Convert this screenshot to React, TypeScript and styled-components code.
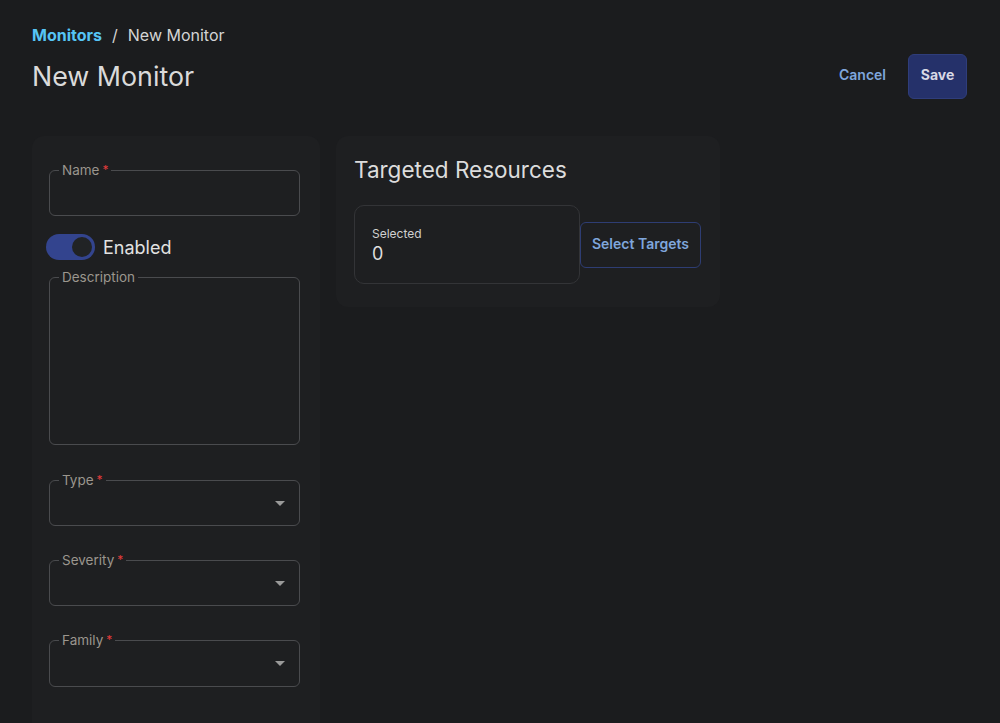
import React from "react";
import styled, { createGlobalStyle } from "styled-components";

const Global = createGlobalStyle`
  html, body { margin: 0; padding: 0; background: #1b1c1e; }
  body { font-family: Inter, "Noto Sans", sans-serif; color: #dcdcdc; }
  * { box-sizing: border-box; }
`;

const Page = styled.div`
  height: 723px;
  padding: 24px 32px 0 32px;
  background: #1b1c1e;
  overflow: hidden;
`;

const Header = styled.div`
  display: flex;
  justify-content: space-between;
  align-items: flex-start;
`;

const TitleBlock = styled.div`
  display: flex;
  flex-direction: column;
`;

const Breadcrumb = styled.div`
  display: flex;
  align-items: center;
  gap: 10px;
  font-size: 16px;
  line-height: 22px;
  color: #d4d4d4;
`;

const Crumb = styled.span`
  color: #56c4f5;
  font-weight: 700;
`;

const Sep = styled.span`
  color: #d4d4d4;
`;

const Title = styled.h1`
  margin: 12px 0 0 0;
  font-size: 26.8px;
  font-weight: 400;
  line-height: 36px;
  color: #dadada;
`;

const Actions = styled.div`
  display: flex;
  align-items: center;
  gap: 12px;
  margin-top: 30px;
  margin-right: 1px;
`;

const TextButton = styled.button`
  background: none;
  border: none;
  color: #7fa6dc;
  font-family: inherit;
  font-size: 14px;
  font-weight: 600;
  padding: 6px 10px 10px 10px;
  cursor: pointer;
`;

const PrimaryButton = styled.button`
  background: #25316a;
  border: 1px solid #2f3d7a;
  border-radius: 6px;
  color: #d8d9e6;
  font-family: inherit;
  font-size: 14px;
  font-weight: 700;
  width: 59px;
  height: 45px;
  padding: 0 0 4px 0;
  cursor: pointer;
`;

const Body = styled.div`
  display: flex;
  align-items: flex-start;
  gap: 16px;
  margin-top: 37px;
`;

const Panel = styled.div<{ $w: number }>`
  width: ${(p) => p.$w}px;
  background: #1e1f21;
  border-radius: 12px;
`;

const FormPanel = styled(Panel)`
  padding: 34px 20px 40px 17px;
  display: flex;
  flex-direction: column;
  min-height: 620px;
`;

const Fieldset = styled.fieldset<{ $h: number; $mt: number }>`
  margin: ${(p) => p.$mt}px 0 0 0;
  padding: 0 12px;
  height: ${(p) => p.$h + 8}px;
  border: 1px solid #4a4b4e;
  border-radius: 6px;
  position: relative;
  min-width: 0;
`;

const Legend = styled.legend`
  padding: 0 3px;
  margin-left: -3px;
  font-size: 13.5px;
  line-height: 16px;
  color: #9b968e;
`;

const Req = styled.span`
  color: #e23b3b;
  margin-left: 3px;
  font-size: 12px;
  vertical-align: top;
`;

const Caret = styled.span`
  position: absolute;
  right: 14px;
  top: 13px;
  width: 0;
  height: 0;
  border-left: 5px solid transparent;
  border-right: 5px solid transparent;
  border-top: 5px solid #9a9a9a;
`;

const ToggleRow = styled.label`
  display: flex;
  align-items: center;
  gap: 8px;
  margin: 18px 0 0 -3px;
  font-size: 18px;
  color: #e2e2e2;
`;

const Track = styled.span`
  width: 49px;
  height: 26px;
  border-radius: 13px;
  background: #33448e;
  position: relative;
  display: inline-block;
`;

const Thumb = styled.span`
  position: absolute;
  right: 3px;
  top: 3px;
  width: 20px;
  height: 20px;
  border-radius: 50%;
  background: #212325;
`;

const TargetPanel = styled(Panel)`
  padding: 20px 19px 23px 18px;
`;

const PanelTitle = styled.h2`
  margin: 0;
  font-size: 22.5px;
  font-weight: 400;
  line-height: 28px;
  color: #dcdcdc;
`;

const TargetRow = styled.div`
  display: flex;
  align-items: center;
  margin-top: 21px;
`;

const StatCard = styled.div`
  width: 226px;
  height: 79px;
  border: 1px solid #333437;
  border-radius: 10px;
  padding: 20px 17px;
  display: flex;
  flex-direction: column;
`;

const StatLabel = styled.span`
  font-size: 12px;
  line-height: 16px;
  color: #d0d0d0;
`;

const StatValue = styled.span`
  font-size: 18px;
  line-height: 24px;
  color: #dedede;
`;

const OutlineButton = styled.button`
  height: 46px;
  width: 121px;
  background: transparent;
  border: 1px solid #2e3d73;
  border-radius: 6px;
  color: #7fa6dc;
  font-family: inherit;
  font-size: 14px;
  font-weight: 600;
  padding: 0 0 2px 0;
  cursor: pointer;
`;

function Field({ label, required, h, mt, select }: { label: string; required?: boolean; h: number; mt: number; select?: boolean }) {
  return (
    <Fieldset $h={h} $mt={mt}>
      <Legend>
        {label}
        {required && <Req>*</Req>}
      </Legend>
      {select && <Caret />}
    </Fieldset>
  );
}

export default function App() {
  return (
    <>
      <Global />
      <Page>
        <Header>
          <TitleBlock>
            <Breadcrumb>
              <Crumb>Monitors</Crumb>
              <Sep>/</Sep>
              <span>New Monitor</span>
            </Breadcrumb>
            <Title>New Monitor</Title>
          </TitleBlock>
          <Actions>
            <TextButton>Cancel</TextButton>
            <PrimaryButton>Save</PrimaryButton>
          </Actions>
        </Header>
        <Body>
          <FormPanel $w={288}>
            <Field label="Name" required h={46} mt={-8} />
            <ToggleRow>
              <Track>
                <Thumb />
              </Track>
              Enabled
            </ToggleRow>
            <Field label="Description" h={168} mt={9} />
            <Field label="Type" required h={46} mt={27} select />
            <Field label="Severity" required h={46} mt={26} select />
            <Field label="Family" required h={47} mt={26} select />
          </FormPanel>
          <TargetPanel $w={384}>
            <PanelTitle>Targeted Resources</PanelTitle>
            <TargetRow>
              <StatCard>
                <StatLabel>Selected</StatLabel>
                <StatValue>0</StatValue>
              </StatCard>
              <OutlineButton>Select Targets</OutlineButton>
            </TargetRow>
          </TargetPanel>
        </Body>
      </Page>
    </>
  );
}
